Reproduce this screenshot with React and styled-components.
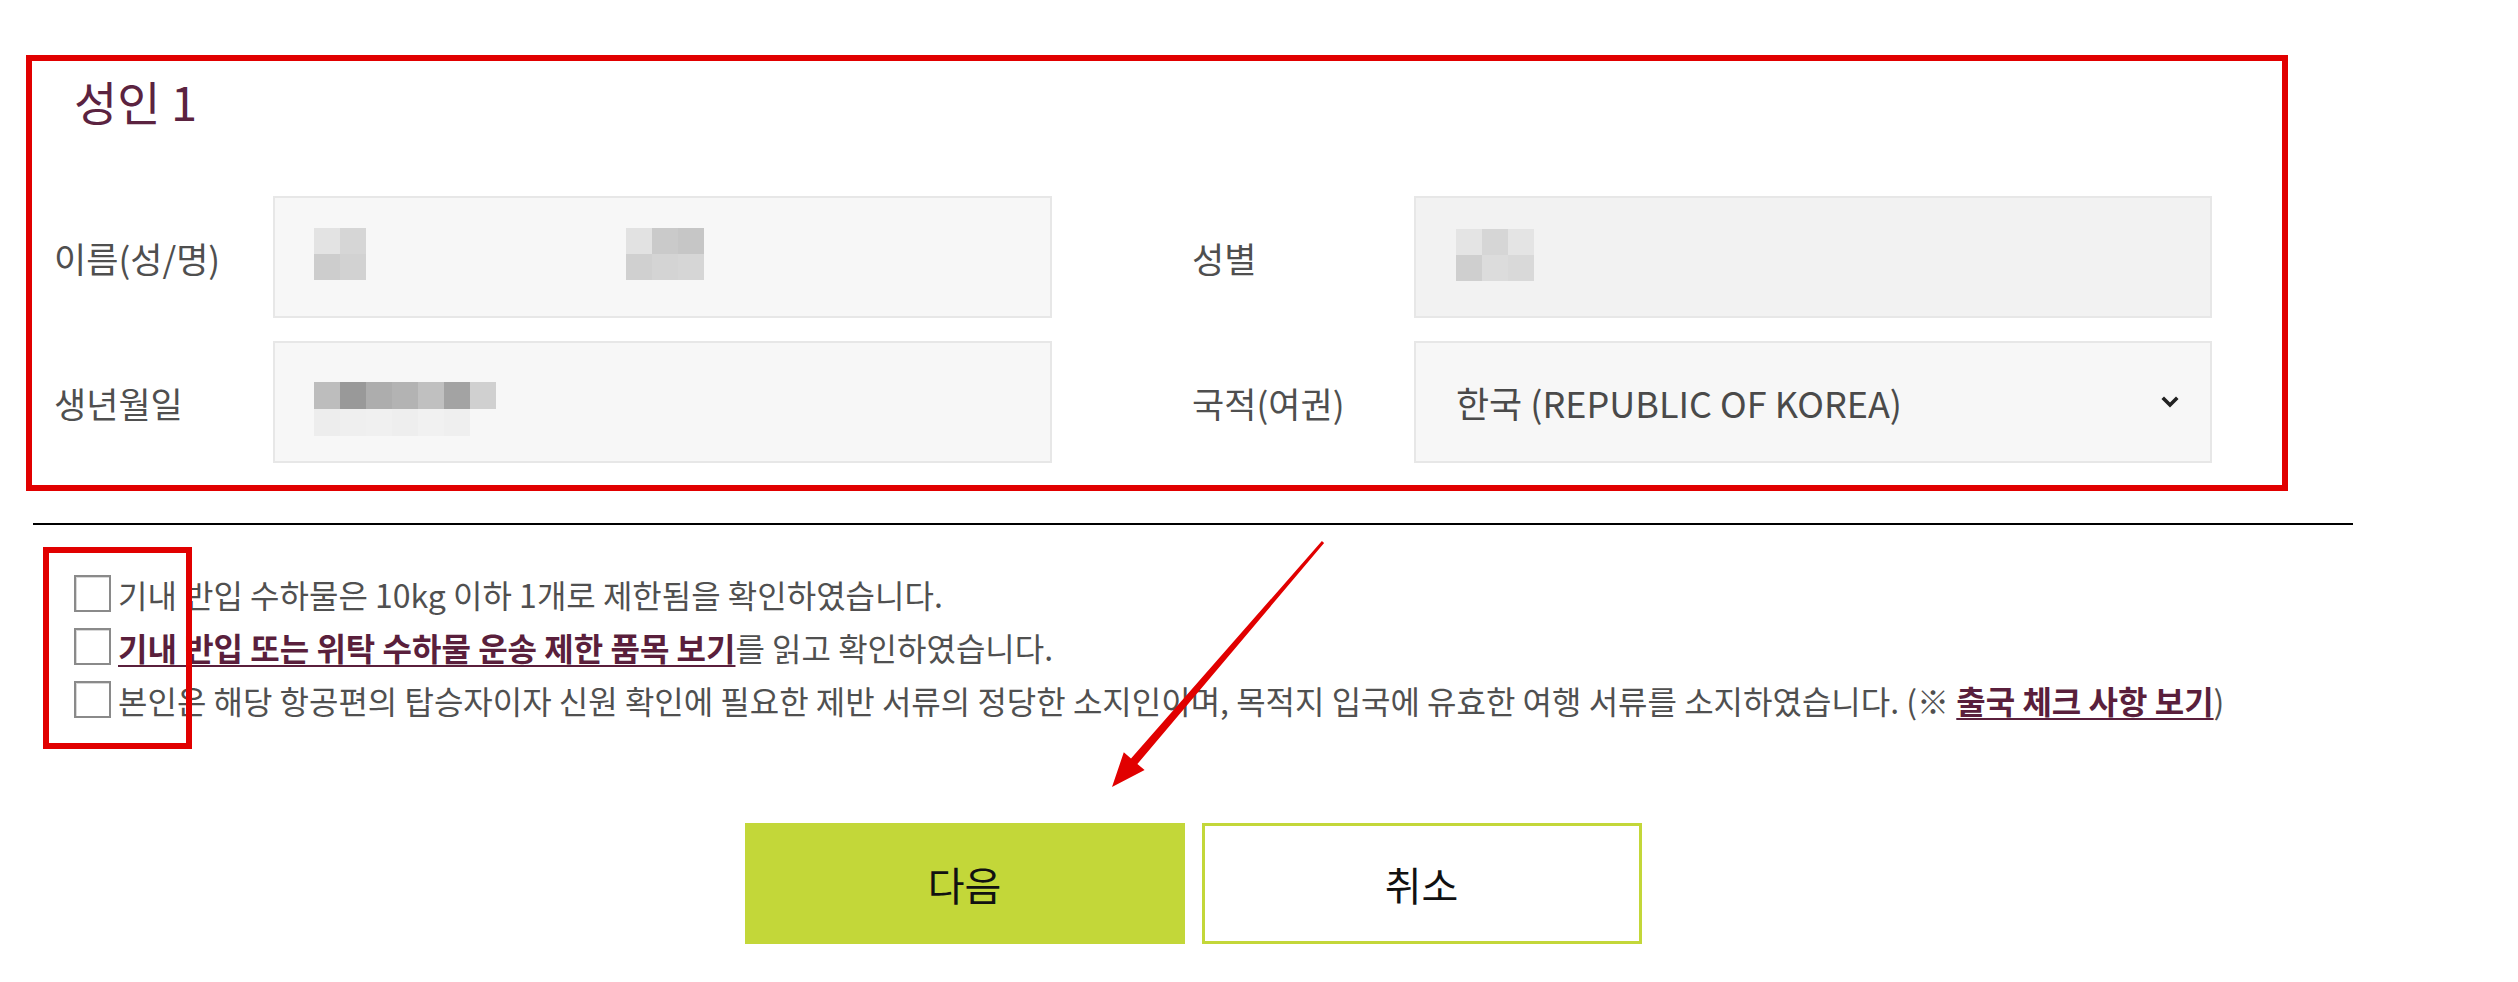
import React from 'react';
import styled, { createGlobalStyle } from 'styled-components';

const GlobalStyle = createGlobalStyle`
  html, body {
    margin: 0;
    padding: 0;
    background: #fff;
  }
  body {
    font-family: 'Noto Sans CJK KR', 'Noto Sans', sans-serif;
    color: #555;
  }
`;

const RED = '#e10000';
const LIME = '#c3d739';
const PLUM = '#5a1f3c';

const Page = styled.div`
  position: relative;
  width: 2518px;
  height: 982px;
  box-sizing: border-box;
  padding: 55px 0 0 26px;
  overflow: hidden;
`;

const PassengerCard = styled.section`
  box-sizing: border-box;
  width: 2262px;
  height: 436px;
  border: 6px solid ${RED};
  padding: 16px 69px 0 22px;
`;

const Title = styled.h2`
  margin: 0 0 0 20px;
  font-size: 47px;
  line-height: 47px;
  font-weight: 400;
  color: #5b2340;
`;

const FieldGrid = styled.div`
  display: flex;
  flex-direction: column;
  gap: 23px;
  margin-top: 72px;
`;

const FieldRow = styled.div`
  display: flex;
  gap: 140px;
`;

const Field = styled.div`
  display: flex;
  align-items: center;
`;

const Label = styled.div`
  width: ${p => p.w}px;
  font-size: 35px;
  color: #4f4f4f;
  flex-shrink: 0;
`;

const InputBox = styled.div`
  box-sizing: border-box;
  width: ${p => p.w}px;
  height: 122px;
  border: 2px solid #e7e7e7;
  background: ${p => (p.disabled ? '#f2f2f2' : '#f7f7f7')};
  display: flex;
  align-items: center;
  gap: ${p => p.gap || 0}px;
  padding: 0 31px 0 ${p => p.pad || 40}px;
  justify-content: ${p => (p.select ? 'space-between' : 'flex-start')};
`;

const SelectText = styled.span`
  font-size: 36px;
  color: #4a4a4a;
`;

const MosaicGrid = styled.div`
  display: grid;
  grid-template-columns: repeat(${p => p.cols}, 26px);
  grid-auto-rows: ${p => p.rowH || 26}px;
  margin-top: ${p => p.offset || 0}px;
`;

const Cell = styled.div`
  background: ${p => p.c};
`;

const Mosaic = ({ rows, rowH, offset }) => (
  <MosaicGrid cols={rows[0].length} rowH={rowH} offset={offset}>
    {rows.flat().map((c, i) => (
      <Cell key={i} c={c} />
    ))}
  </MosaicGrid>
);

const Divider = styled.hr`
  margin: 32px 0 0 7px;
  width: 2320px;
  height: 2px;
  border: 0;
  background: #000;
`;

const Checklist = styled.div`
  position: relative;
  padding: 50px 0 0 48px;
  display: flex;
  flex-direction: column;
  gap: 16px;
`;

const CheckRow = styled.label`
  display: flex;
  align-items: center;
  gap: 7px;
  height: 37px;
  font-size: 32px;
  color: #505050;
  white-space: nowrap;
`;

const Box = styled.span`
  box-sizing: border-box;
  width: 37px;
  height: 37px;
  border: 2px solid #8a8a8a;
  background: #fff;
  box-shadow: inset 1px 1px 0 #d8d8d8;
  flex-shrink: 0;
`;

const Link = styled.a`
  color: ${PLUM};
  font-weight: 700;
  text-decoration: underline;
  text-decoration-thickness: 2px;
  text-underline-offset: 4px;
`;

const Highlight = styled.div`
  position: absolute;
  left: 17px;
  top: 22px;
  width: 149px;
  height: 202px;
  box-sizing: border-box;
  border: 6px solid ${RED};
  pointer-events: none;
`;

const ButtonRow = styled.div`
  display: flex;
  justify-content: center;
  gap: 17px;
  width: 2320px;
  margin: 105px 0 0 7px;
`;

const Button = styled.button`
  box-sizing: border-box;
  width: 440px;
  height: 121px;
  font-family: 'Noto Sans CJK KR', 'Noto Sans', sans-serif;
  font-size: 40px;
  color: #111;
  cursor: pointer;
  background: ${p => (p.primary ? LIME : '#fff')};
  border: ${p => (p.primary ? '0' : `3px solid ${LIME}`)};
`;

const Overlay = styled.svg`
  position: absolute;
  left: 0;
  top: 0;
  pointer-events: none;
`;

const Chevron = () => (
  <svg width="18" height="12" viewBox="0 0 18 12">
    <path d="M3 3 L9 9 L15 3" fill="none" stroke="#222" strokeWidth="3.6" strokeLinecap="square" />
  </svg>
);

const nameA = [
  ['#e3e3e3', '#d6d6d6'],
  ['#cdcdcd', '#d2d2d2'],
];
const nameB = [
  ['#e2e2e2', '#cacaca', '#c6c6c6'],
  ['#d0d0d0', '#d4d4d4', '#d6d6d6'],
];
const birth = [
  ['#bdbdbd', '#999999', '#adadad', '#b3b3b3', '#c0c0c0', '#a3a3a3', '#d0d0d0'],
  ['#ededed', '#efefef', '#f0f0f0', '#eeeeee', '#f1f1f1', '#efefef', '#f7f7f7'],
];
const gender = [
  ['#e4e4e4', '#d6d6d6', '#e4e4e4'],
  ['#cfcfcf', '#dcdcdc', '#d9d9d9'],
];

export default function App() {
  return (
    <Page>
      <GlobalStyle />
      <PassengerCard>
        <Title>성인 1</Title>
        <FieldGrid>
          <FieldRow>
            <Field>
              <Label w={219}>이름(성/명)</Label>
              <InputBox w={779} pad={39} gap={260}>
                <Mosaic rows={nameA} offset={-6} />
                <Mosaic rows={nameB} offset={-6} />
              </InputBox>
            </Field>
            <Field>
              <Label w={222}>성별</Label>
              <InputBox w={798} pad={40} disabled>
                <Mosaic rows={gender} offset={-4} />
              </InputBox>
            </Field>
          </FieldRow>
          <FieldRow>
            <Field>
              <Label w={219}>생년월일</Label>
              <InputBox w={779} pad={39}>
                <Mosaic rows={birth} rowH={27} offset={14} />
              </InputBox>
            </Field>
            <Field>
              <Label w={222}>국적(여권)</Label>
              <InputBox w={798} pad={40} select>
                <SelectText>한국 (REPUBLIC OF KOREA)</SelectText>
                <Chevron />
              </InputBox>
            </Field>
          </FieldRow>
        </FieldGrid>
      </PassengerCard>

      <Divider />

      <Checklist>
        <CheckRow>
          <Box />
          <span>기내 반입 수하물은 10kg 이하 1개로 제한됨을 확인하였습니다.</span>
        </CheckRow>
        <CheckRow>
          <Box />
          <span>
            <Link>기내 반입 또는 위탁 수하물 운송 제한 품목 보기</Link>를 읽고 확인하였습니다.
          </span>
        </CheckRow>
        <CheckRow>
          <Box />
          <span>
            본인은 해당 항공편의 탑승자이자 신원 확인에 필요한 제반 서류의 정당한 소지인이며, 목적지 입국에 유효한 여행 서류를 소지하였습니다. (※{' '}
            <Link>출국 체크 사항 보기</Link>)
          </span>
        </CheckRow>
        <Highlight />
      </Checklist>

      <ButtonRow>
        <Button primary>다음</Button>
        <Button>취소</Button>
      </ButtonRow>

      <Overlay width="2518" height="982" viewBox="0 0 2518 982">
        <polygon
          fill={RED}
          points="1324.1,543 1137.4,763.9 1144.6,770.1 1112,787 1123.8,752.3 1131.0,758.5 1321.9,541"
        />
      </Overlay>
    </Page>
  );
}
